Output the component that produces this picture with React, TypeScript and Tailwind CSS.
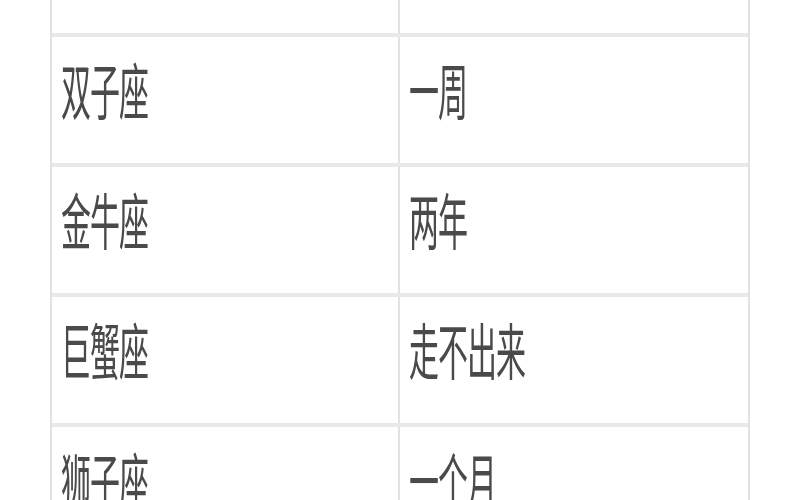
import React from "react";

const rows = [
  { sign: "", time: "" },
  { sign: "双子座", time: "一周" },
  { sign: "金牛座", time: "两年" },
  { sign: "巨蟹座", time: "走不出来" },
  { sign: "狮子座", time: "一个月" },
];

function Cell({ text, right }: { text: string; right?: boolean }) {
  return (
    <div className={`flex items-center pb-6 ${right ? "pl-[9px]" : "pl-[9px] border-r-2 border-[#e2e2e2]"}`}>
      <span className="inline-block origin-center scale-y-[2.05] text-[30px] font-normal leading-none tracking-[-1px] text-[#4a4a4a]">
        {text}
      </span>
    </div>
  );
}

export default function App() {
  return (
    <div className="h-[500px] w-[800px] overflow-hidden bg-white font-['Noto_Sans_CJK_SC','Noto_Sans',sans-serif]">
      <div className="ml-[50px] w-[700px] border-x-2 border-[#e2e2e2] blur-[0.6px]">
        {rows.map((row, i) => (
          <div
            key={i}
            className={`grid grid-cols-2 border-b-4 border-[#e9e9e9] ${i === 0 ? "h-[37px]" : "h-[130px]"}`}
          >
            <Cell text={row.sign} />
            <Cell text={row.time} right />
          </div>
        ))}
      </div>
    </div>
  );
}
